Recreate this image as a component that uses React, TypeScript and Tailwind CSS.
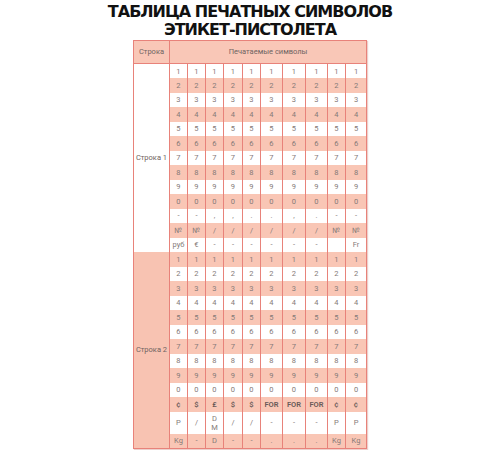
const widths = [18, 18, 18, 19, 18, 22, 23, 22, 18, 21];

const digits = ["1", "2", "3", "4", "5", "6", "7", "8", "9", "0"];
const rep = (s: string) => Array(10).fill(s);

const group1: string[][] = [
  ...digits.map(rep),
  ["-", "-", ",", ",", ".", ".", ",", ".", "-", "-"],
  ["№", "№", "/", "/", "/", "/", "/", "/", "№", "№"],
  ["руб", "€", "-", "-", "-", "-", "-", "-", "", "Fr"],
];

const group2: string[][] = [
  ...digits.map(rep),
  ["¢", "$", "£", "$", "$", "FOR", "FOR", "FOR", "¢", "¢"],
  ["P", "/", "D|M", "/", "/", "-", "-", "-", "P", "P"],
  ["Kg", "-", "D", "-", "-", ".", ".", ".", "Kg", "Kg"],
];

const Cell = ({ v, bold }: { v: string; bold?: boolean }) => (
  <td
    className={
      "border-x border-[#e8827a] p-0 text-center align-middle leading-[9px] " +
      (bold ? "font-semibold text-[#6a5a58]" : "text-[#857a78]")
    }
  >
    {v.includes("|") ? (
      <div className="flex flex-col">
        {v.split("|").map((p) => (
          <span key={p}>{p}</span>
        ))}
      </div>
    ) : (
      v
    )}
  </td>
);

const Group = ({ rows, label, offset }: { rows: string[][]; label: string; offset: number }) => (
  <>
    {rows.map((r, i) => {
      const pink = (i + offset) % 2 === 1;
      const tall = r[2] === "D|M";
      return (
        <tr
          key={label + i}
          className={(pink ? "bg-[#f9c6b5] " : "bg-white ") + (tall ? "h-[22px]" : "h-[14.5px]")}
        >
          {i === 0 && (
            <td
              rowSpan={rows.length}
              className={
                "border-r border-[#e8827a] text-center align-middle text-[#6f6462] " +
                (offset === 0 ? "bg-white" : "bg-[#f8c3b2]")
              }
            >
              {label}
            </td>
          )}
          {r.map((v, j) => (
            <Cell key={j} v={v} bold={r[0] === "¢"} />
          ))}
        </tr>
      );
    })}
  </>
);

export default function App() {
  return (
    <div className="w-[500px] h-[450px] bg-white flex flex-col items-center pt-[3px]">
      <h1
        className="text-center font-bold text-[16px] leading-[18px] tracking-[-1px] text-[#111]"
        style={{ fontFamily: '"DejaVu Sans", sans-serif' }}
      >
        ТАБЛИЦА ПЕЧАТНЫХ СИМВОЛОВ
        <br />
        ЭТИКЕТ-ПИСТОЛЕТА
      </h1>
      <table
        className="mt-px border-collapse table-fixed w-[233px] border border-[#e8827a] text-[7.5px] shadow-[1px_1px_1px_rgba(200,120,110,0.35)]"
        style={{ fontFamily: 'Roboto, "Liberation Sans", sans-serif' }}
      >
        <colgroup>
          <col style={{ width: 36 }} />
          {widths.map((w, i) => (
            <col key={i} style={{ width: w }} />
          ))}
        </colgroup>
        <thead>
          <tr className="h-[23px] bg-[#f9c7b7] text-[#6f6462]">
            <th className="border-r border-b border-[#e8827a] font-normal">Строка</th>
            <th colSpan={10} className="border-b border-[#e8827a] font-normal">
              Печатаемые символы
            </th>
          </tr>
        </thead>
        <tbody>
          <Group rows={group1} label="Строка 1" offset={0} />
          <Group rows={group2} label="Строка 2" offset={1} />
        </tbody>
      </table>
    </div>
  );
}
